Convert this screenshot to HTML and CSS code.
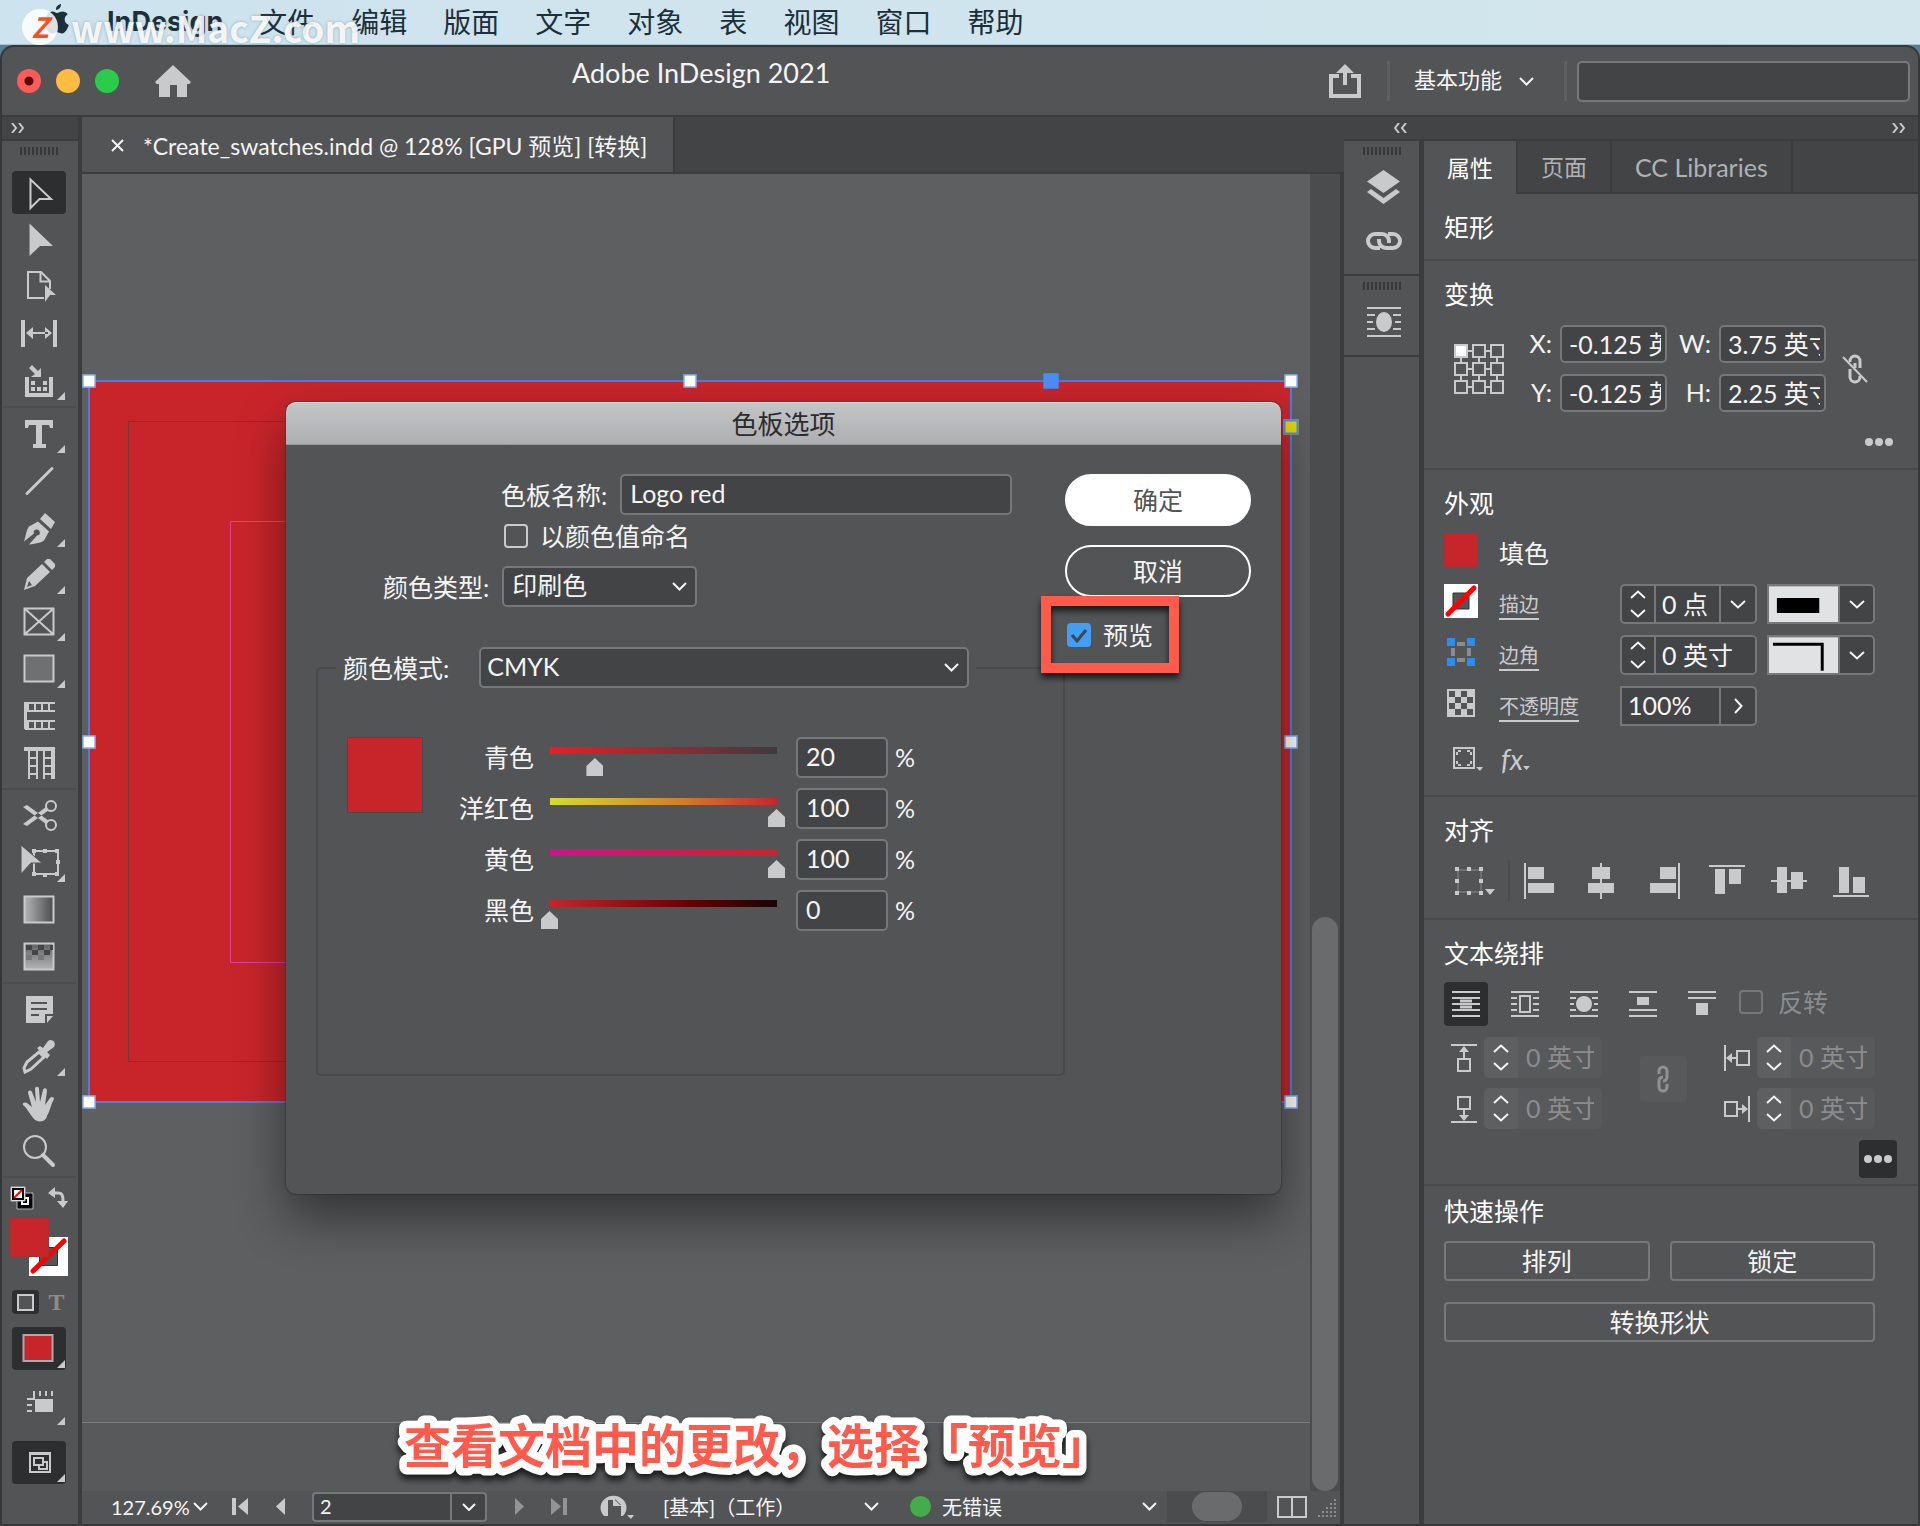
FILE: index.html
```html
<!DOCTYPE html>
<html lang="zh-CN">
<head>
    <meta charset="utf-8">
    <title>Adobe InDesign 2021</title>
    <link rel="stylesheet" href="styles.css">
</head>
<body>
    <header class="menubar">
        <svg class="apple" width="24" height="30" viewBox="0 0 24 30"><path d="M16 0c.3 3-2.400 6-5 6-.3-3 2.200-5.700 5-6zM12 9c1.500 0 3-1.500 5.500-1.500 2 0 4 1 5.200 2.800-4.500 2.700-3.800 9 1.100 10.700C22.500 25 20 29.500 17 29.500c-2 0-2.700-1.200-4.900-1.200-2.300 0-3.100 1.200-5 1.200C3.500 29.500 0 23.500 0 17.500 0 11 4 7.600 7.500 7.600c2 0 3.300 1.400 4.500 1.400z"/></svg>
        <nav class="menu">
            <a href="#" class="app-name">InDesign</a>
            <a href="#">文件</a>
            <a href="#">编辑</a>
            <a href="#">版面</a>
            <a href="#">文字</a>
            <a href="#">对象</a>
            <a href="#">表</a>
            <a href="#">视图</a>
            <a href="#">窗口</a>
            <a href="#">帮助</a>
        </nav>
        <div class="watermark"><span class="watermark-logo">Z</span>www.MacZ.com</div>
    </header>

    <div class="window">
        <div class="titlebar">
            <div class="lights">
                <button class="light close" aria-label="关闭"></button>
                <button class="light minimize" aria-label="最小化"></button>
                <button class="light maximize" aria-label="缩放"></button>
            </div>
            <button class="plain home" aria-label="主页">
                <svg width="36" height="32" viewBox="0 0 36 32" fill="#c9cacc"><path d="M18 0L36 17l-1.500 2H32v13H22V20h-7v12H4V19H1.500L0 17z"/></svg>
            </button>
            <h1>Adobe InDesign 2021</h1>
            <button class="plain share" aria-label="共享">
                <svg width="32" height="34" viewBox="0 0 32 34" fill="none" stroke="#c9cacc" stroke-width="4"><path d="M10 12H2v20h28V12h-8M16 21V6"/><path d="M7 9l9-9 9 9z" fill="#c9cacc" stroke="none"/></svg>
            </button>
            <select class="workspace-select" aria-label="工作区"><option>基本功能</option></select>
            <input type="text" class="search" aria-label="搜索">
        </div>

        <div class="workspace">
            <!-- toolbox -->
            <aside class="toolbox">
                <div class="dock-head">
                    <svg width="13" height="10" viewBox="0 0 13 10" class="line"><path d="M1 0l4 5-4 5M8 0l4 5-4 5"/></svg>
                </div>
                <div class="grip"></div>

                <div class="tool-group">
                    <button class="tool active" aria-label="选择工具"><svg viewBox="0 0 54 43" class="line"><path d="M18.500 8.500L39 28H27.500L18.500 37z"/></svg></button>
                    <button class="tool" aria-label="直接选择工具"><svg viewBox="0 0 54 43" class="solid"><path d="M17.500 5.500L41 28H28L17.500 38z"/></svg></button>
                    <button class="tool" aria-label="页面工具"><svg viewBox="0 0 54 43" class="line"><path d="M32 33H16V7h13l9 9v8M28.500 7v9.500H38"/><path class="fill" d="M33 20l11 10h-6l-5 7z"/></svg></button>
                    <button class="tool" aria-label="间隙工具"><svg viewBox="0 0 54 43" class="solid"><path d="M9 8h4v27H9zM41 8h4v27h-4zM18 20h18v2H18zM14 21l7-6v12zM40 21l-7-6v12z"/></svg></button>
                    <button class="tool" aria-label="内容收集器工具"><svg viewBox="0 0 54 43" class="solid"><path d="M13 18h4v16h20V18h4v20H13zM19 22h4v4h-4zM31 22h4v4h-4zM19 28h4v4h-4zM25 28h4v4h-4zM31 28h4v4h-4zM17 9l3-3 6 6 3-3v9H19l4-3zM45 41l8-8v8z"/></svg></button>
                </div>

                <div class="tool-group">
                    <button class="tool" aria-label="文字工具"><svg viewBox="0 0 54 43" class="solid"><path d="M13 8h28v8h-3l-1-3h-7v19h4v4H21v-4h3V13h-7l-1 3h-3zM45 41l8-8v8z"/></svg></button>
                    <button class="tool" aria-label="直线工具"><svg viewBox="0 0 54 43" class="line"><path d="M15 34.500L40 9.500" stroke-width="3" stroke-linecap="round"/></svg></button>
                    <button class="tool" aria-label="钢笔工具"><svg viewBox="0 0 54 43" class="solid"><path d="M12 35.500c2-6 2-11 5-15l9-5 11 10-5 9c-4 3-9 3-15 4l8-9a3 3 0 1 0-3-2zM28 13l5-6 10 9-4 7zM45 41l8-8v8z"/></svg></button>
                    <button class="tool" aria-label="铅笔工具"><svg viewBox="0 0 54 43" class="solid"><path fill-rule="evenodd" d="M12 37l3-12L30 11l8 8-15 14zM15 34l5-2-3-4zM32 9l3-3h3l5 5v3l-3 3zM45 41l8-8v8z"/></svg></button>
                    <button class="tool" aria-label="矩形框架工具"><svg viewBox="0 0 54 43" class="line"><path d="M12.500 8.500h29v26h-29zM12.500 8.500l29 26M41.500 8.500l-29 26"/><path class="fill" d="M45 41l8-8v8z"/></svg></button>
                    <button class="tool" aria-label="矩形工具"><svg viewBox="0 0 54 43" class="line"><path d="M12.500 8.500h29v26h-29z" fill="#6f7072"/><path class="fill" d="M45 41l8-8v8z"/></svg></button>
                    <button class="tool" aria-label="水平网格工具"><svg viewBox="0 0 54 43" class="line"><path d="M43 9H14v26h29M13 17h30M13 27h30M16 9v8M23 9v8M30 9v8M37 9v8M16 27v8M23 27v8M30 27v8M37 27v8" /><path d="M13.500 8v27" stroke-width="3"/></svg></button>
                    <button class="tool" aria-label="垂直网格工具"><svg viewBox="0 0 54 43" class="line"><path d="M12 8h31M17 8v30M25 8v30M32 8v30M41 8v30M17 17h8M17 25h8M17 33h8M32 17h9M32 25h9M32 33h9"/><path d="M12 8h31M41 8v30" stroke-width="4"/></svg></button>
                </div>

                <div class="tool-group">
                    <button class="tool" aria-label="剪刀工具"><svg viewBox="0 0 54 43" class="line"><circle cx="39" cy="12" r="5"/><circle cx="39" cy="31" r="5"/><path d="M11 13l4-2 22 16-3 3zM11 30l4 2 22-16-3-3z" class="fill"/></svg></button>
                    <button class="tool" aria-label="自由变换工具"><svg viewBox="0 0 54 43" class="line"><path d="M22 10h24v23H22z"/><path class="fill" d="M20 8h4v4h-4zM31 8h4v4h-4zM43 8h4v4h-4zM44 19h4v4h-4zM43 31h4v4h-4zM31 32h4v4h-4zM20 31h4v4h-4z"/><path fill="#c9cacc" stroke="#535456" stroke-width="1" d="M9 4l21 18H19L9 33z"/><path class="fill" d="M45 41l8-8v8z"/></svg></button>
                    <button class="tool" aria-label="渐变色板工具"><svg viewBox="0 0 54 43" class="line"><defs><linearGradient id="swatchGradient"><stop offset="0" stop-color="#b4b5b7"/><stop offset="1" stop-color="#4a4b4d"/></linearGradient></defs><path d="M12.500 8.500h29v26h-29z" fill="url(#swatchGradient)"/></svg></button>
                    <button class="tool" aria-label="渐变羽化工具"><svg viewBox="0 0 54 43" class="line"><defs><linearGradient id="featherGradient" x2="0" y2="1"><stop offset="0" stop-color="#606163"/><stop offset="1" stop-color="#b4b5b7"/></linearGradient></defs><path d="M12.500 8.500h29v26h-29z" fill="url(#featherGradient)"/><path fill="#444547" stroke="none" d="M14 10h6v5h-6zM26 10h6v5h-6zM20 15h6v5h-6zM32 15h6v5h-6zM38 10h3v5h-3z"/><path fill="#77787a" stroke="none" d="M14 20h6v5h-6zM26 20h6v5h-6z"/></svg></button>
                </div>

                <div class="tool-group">
                    <button class="tool" aria-label="附注工具"><svg viewBox="0 0 54 43" class="solid"><path fill-rule="evenodd" d="M14 8h27v18h-8v9H14zM19 14v2h16v-2zM19 20v2h16v-2zM19 26v2h8v-2zM35 28h6l-6 7z"/></svg></button>
                    <button class="tool" aria-label="吸管工具"><svg viewBox="0 0 54 43" class="line"><path d="M27 17l5 5-13 12-6 3-1-4 3-6z" stroke-width="3"/><path class="fill" d="M25 13l3-2 3 2 5-7c4-3 9 2 6 6l-7 5 3 3-3 4z"/><path class="fill" d="M45 41l8-8v8z"/></svg></button>
                    <button class="tool" aria-label="抓手工具"><svg viewBox="0 0 54 43" class="solid"><path d="M22 37c-5-6-7-11-11-14-1-3 3-3 4-2l5 4-4-14c0-3 3-3 4-1l4 10-1-13c0-3 4-3 4 0l1 13 3-12c1-3 4-2 4 1l-2 14 5-7c2-2 4-1 4 1-3 5-4 12-7 17-1 6-9 7-13 3z"/></svg></button>
                    <button class="tool" aria-label="缩放显示工具"><svg viewBox="0 0 54 43" class="line"><circle cx="23" cy="18" r="11"/><path d="M31 26l10 10" stroke-width="4" stroke-linecap="round"/></svg></button>
                </div>

                <div class="colors">
                    <button class="plain" aria-label="默认填色和描边"><svg width="24" height="24" viewBox="0 0 24 24"><path d="M7 7h16v16H7z" fill="#000" stroke="#b9babc"/><path d="M12 12h6v6h-6z" fill="none" stroke="#fff" stroke-width="2"/><path d="M1 1h14v14H1z" fill="#fff" stroke="#b9babc"/><path d="M3 3h10v10H3z" fill="#fff" stroke="#000" stroke-width="2"/><path d="M4 12l8-8" stroke="#f00" stroke-width="2"/></svg></button>
                    <button class="plain" aria-label="互换填色和描边"><svg width="20" height="22" viewBox="0 0 20 22" class="line"><path d="M6 6h4c4 0 5 2 5 8" stroke-width="3"/><path class="fill" d="M0 6l7-6v11zM9 14h11l-5 7z"/></svg></button>
                </div>
                <div class="fill-stroke">
                    <button class="stroke-box" aria-label="描边"><svg width="39" height="39" viewBox="0 0 39 39"><path d="M0 0h39v39H0z" fill="#fff"/><path d="M10.500 10.500h18v18h-18z" fill="#535456" stroke="#333"/><path d="M4 34L35 4" stroke="#f00" stroke-width="5" stroke-linecap="round"/></svg></button>
                    <button class="fill-box" aria-label="填色"></button>
                </div>
                <div class="formatting">
                    <button class="mini active" aria-label="格式针对容器"><svg width="17" height="17" viewBox="0 0 17 17" class="line"><path d="M1 1h15v15H1z" fill="#535456"/></svg></button>
                    <button class="mini text-format">T</button>
                </div>
                <button class="tool active" aria-label="应用颜色"><svg viewBox="0 0 54 43" class="line"><path d="M11.500 8h29v26h-29z" fill="#c8252b" stroke="#aaabad"/><path class="fill" d="M45 41l8-8v8z"/></svg></button>
                <button class="tool view-tool" aria-label="视图选项"><svg viewBox="0 0 54 43" class="solid"><path d="M23 15h18v13H23zM15 14h6V7h2v9h-8zM15 20h5v2h-5zM15 26h5v2h-5zM27 7h2v5h-2zM33 7h2v5h-2zM39 7h2v5h-2zM45 41l8-8v8z"/></svg></button>
                <button class="tool active" aria-label="屏幕模式"><svg viewBox="0 0 54 43" class="line"><path d="M18 12h20v19H18zM18 13h20M22 17h9v7h-9zM27 24v4h8v-7h-4"/><path class="fill" d="M45 41l8-8v8z"/></svg></button>
            </aside>

            <!-- document -->
            <main class="document">
                <div class="tabs">
                    <div class="tab">
                        <button class="plain" aria-label="关闭文档"><svg width="13" height="13" viewBox="0 0 13 13" class="line bright"><path d="M1 1l11 11M12 1L1 12"/></svg></button>
                        <span>*Create_swatches.indd @ 128% [GPU 预览] [转换]</span>
                    </div>
                </div>

                <div class="stage">
                    <div class="pasteboard">
                        <div class="page-edge"></div>
                        <div class="artwork">
                            <div class="bleed-guide"></div>
                            <div class="margin-guide"></div>
                            <i class="handle h-tl"></i><i class="handle h-t"></i><i class="handle h-tr"></i>
                            <i class="handle h-l"></i><i class="handle h-r"></i>
                            <i class="handle h-bl"></i><i class="handle h-br"></i>
                            <i class="handle h-anchor"></i><i class="handle h-corner"></i>
                        </div>

                        <div class="dialog" role="dialog" aria-labelledby="dialogTitle">
                            <h2 id="dialogTitle">色板选项</h2>
                            <form class="dialog-body">
                                <div class="dialog-main">
                                    <div class="form-row name-row">
                                        <label for="swatchName">色板名称:</label>
                                        <input type="text" id="swatchName" value="Logo red">
                                    </div>
                                    <div class="form-row check-row">
                                        <input type="checkbox" id="nameByValue">
                                        <label for="nameByValue">以颜色值命名</label>
                                    </div>
                                    <div class="form-row type-row">
                                        <label for="colorType">颜色类型:</label>
                                        <select id="colorType"><option>印刷色</option></select>
                                    </div>
                                    <fieldset>
                                        <legend>
                                            <label for="colorMode">颜色模式:</label>
                                            <select id="colorMode"><option>CMYK</option></select>
                                        </legend>
                                        <div class="preview-swatch"></div>
                                        <div class="sliders">
                                            <label for="cyan">青色</label>
                                            <input type="range" id="cyan" class="cyan" value="20">
                                            <input type="text" aria-label="青色 %" value="20"><span>%</span>
                                            <label for="magenta">洋红色</label>
                                            <input type="range" id="magenta" class="magenta" value="100">
                                            <input type="text" aria-label="洋红色 %" value="100"><span>%</span>
                                            <label for="yellow">黄色</label>
                                            <input type="range" id="yellow" class="yellow" value="100">
                                            <input type="text" aria-label="黄色 %" value="100"><span>%</span>
                                            <label for="black">黑色</label>
                                            <input type="range" id="black" class="black" value="0">
                                            <input type="text" aria-label="黑色 %" value="0"><span>%</span>
                                        </div>
                                    </fieldset>
                                </div>
                                <div class="dialog-actions">
                                    <button type="button" class="pill primary">确定</button>
                                    <button type="button" class="pill">取消</button>
                                    <div class="preview-check">
                                        <input type="checkbox" id="preview" checked>
                                        <label for="preview">预览</label>
                                    </div>
                                </div>
                            </form>
                        </div>

                        <svg class="caption" width="720" height="70"><text x="11" y="54">查看文档中的更改，选择「预览」</text></svg>
                    </div>
                    <div class="scroll-track"><div class="scroll-thumb"></div></div>
                </div>

                <footer class="statusbar">
                    <select class="zoom" aria-label="缩放级别"><option>127.69%</option></select>
                    <button class="nav" aria-label="第一页"><svg width="16" height="17" viewBox="0 0 16 17" class="solid"><path d="M0 0h4v17H0zM16 0v17L6 8.500z"/></svg></button>
                    <button class="nav" aria-label="上一页"><svg width="9" height="17" viewBox="0 0 9 17" class="solid"><path d="M9 0v17L0 8.500z"/></svg></button>
                    <div class="page-box">
                        <input type="text" aria-label="页码" value="2">
                        <button aria-label="选择页面"><svg width="14" height="8" viewBox="0 0 14 8" class="line bright"><path d="M1 1l6 6 6-6"/></svg></button>
                    </div>
                    <button class="nav dim" aria-label="下一页"><svg width="9" height="17" viewBox="0 0 9 17" class="solid"><path d="M0 0v17l9-8.500z"/></svg></button>
                    <button class="nav dim" aria-label="最后一页"><svg width="16" height="17" viewBox="0 0 16 17" class="solid"><path d="M16 0h-4v17h4zM0 0v17l10-8.500z"/></svg></button>
                    <button class="nav open-btn" aria-label="打开"><svg width="34" height="24" viewBox="0 0 34 24" class="solid"><path d="M4 21A13 12 0 1 1 23 21H21V11h-8V5H8v16z"/><path d="M15 4l6 6h-6z" fill="#535456"/><path d="M15 5l5 5h-5zM27 20h7l-3 4z"/></svg></button>
                    <select class="preset" aria-label="印前检查配置文件"><option>[基本]（工作）</option></select>
                    <span class="status-dot"></span>
                    <select class="errors" aria-label="印前检查"><option>无错误</option></select>
                    <div class="h-scroll"><div></div></div>
                    <button class="plain split" aria-label="拆分视图"><svg width="30" height="22" viewBox="0 0 30 22" class="line"><path d="M1 1h28v20H1zM15 1v20"/></svg></button>
                    <svg class="resize" width="18" height="20" viewBox="0 0 18 20" fill="#8b8c8e"><path d="M16 2h2v2h-2zM12 6h2v2h-2zM16 6h2v2h-2zM8 10h2v2H8zM12 10h2v2h-2zM16 10h2v2h-2zM4 14h2v2H4zM8 14h2v2H8zM12 14h2v2h-2zM16 14h2v2h-2zM0 18h2v2H0zM4 18h2v2H4zM8 18h2v2H8zM12 18h2v2h-2zM16 18h2v2h-2z"/></svg>
                </footer>
            </main>

            <!-- right dock -->
            <aside class="dock">
                <div class="dock-head">
                    <svg width="13" height="10" viewBox="0 0 13 10" class="line"><path d="M5 0L1 5l4 5M12 0L8 5l4 5"/></svg>
                    <svg width="13" height="10" viewBox="0 0 13 10" class="line"><path d="M1 0l4 5-4 5M8 0l4 5-4 5"/></svg>
                </div>
                <div class="dock-body">
                    <div class="icon-strip">
                        <div class="strip-group">
                            <div class="grip"></div>
                            <button class="strip-btn" aria-label="图层"><svg width="33" height="34" viewBox="0 0 33 34" class="solid"><path d="M16.500 0L33 11.500 16.500 23 0 11.500zM0 22l4-3 12.500 9L29 19l4 3-16.500 12z"/></svg></button>
                            <button class="strip-btn" aria-label="链接"><svg width="38" height="20" viewBox="0 0 38 20" class="line"><path d="M15 17h-5a7 7 0 0 1 0-14h7a7 7 0 0 1 7 7v2M23 3h5a7 7 0 0 1 0 14h-7a7 7 0 0 1-7-7V8" stroke-width="4"/></svg></button>
                        </div>
                        <div class="strip-group">
                            <div class="grip"></div>
                            <button class="strip-btn" aria-label="文本绕排"><svg width="34" height="30" viewBox="0 0 34 30" class="line"><path d="M0 1h34M0 8h8M26 8h8M0 15h6M28 15h6M0 22h8M26 22h8M0 29h34"/><ellipse cx="17" cy="15" rx="8" ry="10" class="fill"/></svg></button>
                        </div>
                    </div>

                    <div class="panel">
                        <div class="panel-tabs">
                            <button class="selected">属性</button>
                            <button>页面</button>
                            <button class="libraries">CC Libraries</button>
                        </div>

                        <section class="section"><h3>矩形</h3></section>

                        <section class="section">
                            <h3>变换</h3>
                            <div class="transform">
                                <svg width="50" height="50" viewBox="0 0 50 50" class="line"><path d="M13 7h6M31 7h6M13 25h6M31 25h6M13 43h6M31 43h6M7 13v6M7 31v6M25 13v6M25 31v6M43 13v6M43 31v6"/><path d="M1 1h12v12H1z" fill="#fff"/><path d="M19 1h12v12H19zM37 1h12v12H37zM1 19h12v12H1zM19 19h12v12H19zM37 19h12v12H37zM1 37h12v12H1zM19 37h12v12H19zM37 37h12v12H37z"/></svg>
                                <div class="coords">
                                    <label for="posX">X:</label><input type="text" id="posX" value="-0.125 英寸">
                                    <label for="sizeW">W:</label><input type="text" id="sizeW" value="3.75 英寸">
                                    <label for="posY">Y:</label><input type="text" id="posY" value="-0.125 英寸">
                                    <label for="sizeH">H:</label><input type="text" id="sizeH" value="2.25 英寸">
                                </div>
                                <button class="plain" aria-label="约束比例"><svg width="26" height="30" viewBox="0 0 26 30" class="line"><path d="M8 8V7a5 5 0 0 1 10 0v7M8 15v8a5 5 0 0 0 10 0v-1M13 9v5" stroke-width="3"/><path d="M1 3l24 25"/></svg></button>
                            </div>
                            <button class="plain more" aria-label="更多选项"><svg width="28" height="8" viewBox="0 0 28 8" class="solid"><circle cx="4" cy="4" r="4"/><circle cx="14" cy="4" r="4"/><circle cx="24" cy="4" r="4"/></svg></button>
                        </section>

                        <section class="section">
                            <h3>外观</h3>
                            <div class="appearance">
                                <button class="fill-swatch" aria-label="填色"></button>
                                <span class="fill-label">填色</span>

                                <svg class="row-start" width="34" height="34" viewBox="0 0 34 34"><path d="M0 0h34v34H0z" fill="#fff"/><path d="M9 9h16v16H9z" fill="#535456" stroke="#333"/><path d="M4 30L30 4" stroke="#f00" stroke-width="5" stroke-linecap="round"/></svg>
                                <a href="#">描边</a>
                                <div class="combo">
                                    <span class="stepper"><button aria-label="增加"></button><button aria-label="减少"></button></span>
                                    <input type="text" aria-label="描边粗细" value="0 点">
                                    <button class="drop" aria-label="粗细列表"></button>
                                </div>
                                <button class="combo picker" aria-label="描边样式"><svg width="70" height="38" viewBox="0 0 70 38"><path d="M0 0h70v38H0z" fill="#e1e2e4"/><path d="M8 12h43v15H8z"/></svg><span class="drop"></span></button>

                                <svg class="row-start" width="34" height="34" viewBox="0 0 34 34"><path d="M13 7h8v4h-8zM13 23h8v4h-8zM7 13h4v8H7zM23 13h4v8h-4z" fill="#8b8c8e"/><path d="M3 3h8v8H3zM23 3h8v8h-8zM3 23h8v8H3zM23 23h8v8h-8z" fill="#2c8cf0"/></svg>
                                <a href="#">边角</a>
                                <div class="combo">
                                    <span class="stepper"><button aria-label="增加"></button><button aria-label="减少"></button></span>
                                    <input type="text" aria-label="边角大小" value="0 英寸">
                                </div>
                                <button class="combo picker" aria-label="边角形状"><svg width="70" height="38" viewBox="0 0 70 38"><path d="M0 0h70v38H0z" fill="#e1e2e4"/><path d="M4 7h50v27" fill="none" stroke="#000" stroke-width="3"/></svg><span class="drop"></span></button>

                                <svg class="row-start" width="34" height="34" viewBox="0 0 34 34"><path d="M4 4h26v26H4z" fill="none" stroke="#c9cacc" stroke-width="2"/><path d="M11 5h6v6h-6zM23 5h6v6h-6zM5 11h6v6H5zM17 11h6v6h-6zM11 17h6v6h-6zM23 17h6v6h-6zM5 23h6v6H5zM17 23h6v6h-6z" fill="#c9cacc"/></svg>
                                <a href="#">不透明度</a>
                                <div class="combo square">
                                    <input type="text" aria-label="不透明度" value="100%">
                                    <button class="drop side" aria-label="不透明度滑块"></button>
                                </div>
                            </div>
                            <div class="effects">
                                <button class="plain" aria-label="对象样式"><svg width="30" height="24" viewBox="0 0 30 24" class="line"><path d="M1 1h20v20H1z"/><path d="M5 4h3M14 4h3M5 18h3M14 18h3M4 5v3M4 14v3M18 5v3M18 14v3" stroke="#c9cacc"/><path class="fill" d="M23 20h7l-3 4z"/></svg></button>
                                <button class="plain fx">fx<svg width="7" height="4" viewBox="0 0 7 4" class="solid"><path d="M0 0h7L3.500 4z"/></svg></button>
                            </div>
                        </section>

                        <section class="section">
                            <h3>对齐</h3>
                            <div class="align">
                                <button class="align-to" aria-label="对齐选区"><svg width="40" height="30" viewBox="0 0 40 30" class="line"><path d="M3 4h23v22H3z" stroke="#8b8c8e" stroke-width="1"/><path class="fill" d="M0 1h4v4H0zM12 1h4v4h-4zM24 1h4v4h-4zM0 13h4v4H0zM24 13h4v4h-4zM0 25h4v4H0zM12 25h4v4h-4zM24 25h4v4h-4zM30 23h10l-5 6z"/></svg></button>
                                <button aria-label="左对齐"><svg width="36" height="36" viewBox="0 0 36 36" class="solid"><path d="M1 0h2v36H1zM5 4h16v12H5zM5 20h26v10H5z"/></svg></button>
                                <button aria-label="水平居中对齐"><svg width="36" height="36" viewBox="0 0 36 36" class="solid"><path d="M15 0h2v36h-2zM7 4h18v12H7zM3 20h26v10H3z"/></svg></button>
                                <button aria-label="右对齐"><svg width="36" height="36" viewBox="0 0 36 36" class="solid"><path d="M31 0h2v36h-2zM13 4h16v12H13zM3 20h26v10H3z"/></svg></button>
                                <button aria-label="顶对齐"><svg width="36" height="36" viewBox="0 0 36 36" class="solid"><path d="M0 2h36v2H0zM6 6h10v25H6zM20 6h12v15H20z"/></svg></button>
                                <button aria-label="垂直居中对齐"><svg width="36" height="36" viewBox="0 0 36 36" class="solid"><path d="M0 17h36v2H0zM6 4h10v26H6zM20 9h12v17H20z"/></svg></button>
                                <button aria-label="底对齐"><svg width="36" height="36" viewBox="0 0 36 36" class="solid"><path d="M0 32h36v2H0zM6 4h10v26H6zM20 14h12v16H20z"/></svg></button>
                            </div>
                        </section>

                        <section class="section wrap-section">
                            <h3>文本绕排</h3>
                            <div class="wrap-modes">
                                <button class="active" aria-label="无文本绕排"><svg width="28" height="28" viewBox="0 0 28 28" class="line"><path d="M0 2h28M0 8h28M0 14h28M0 20h28M0 26h28"/><path d="M8 11h12M8 17h12" stroke-width="3"/></svg></button>
                                <button aria-label="沿定界框绕排"><svg width="28" height="28" viewBox="0 0 28 28" class="line"><path d="M0 2h28M0 8h6M22 8h6M0 14h6M22 14h6M0 20h6M22 20h6M0 26h28M9 6h10v16H9z"/></svg></button>
                                <button aria-label="沿对象形状绕排"><svg width="28" height="28" viewBox="0 0 28 28" class="line"><path d="M0 2h28M0 8h6M22 8h6M0 14h4M24 14h4M0 20h6M22 20h6M0 26h28"/><circle cx="14" cy="14" r="8" class="fill"/></svg></button>
                                <button aria-label="上下型绕排"><svg width="28" height="28" viewBox="0 0 28 28" class="line"><path d="M0 2h28M0 20h28M0 26h28"/><path class="fill" d="M8 7h12v8H8z"/></svg></button>
                                <button aria-label="下型绕排"><svg width="28" height="28" viewBox="0 0 28 28" class="line"><path d="M0 2h28M0 8h28"/><path class="fill" d="M8 13h12v12H8z"/></svg></button>
                                <input type="checkbox" id="invert" disabled>
                                <label for="invert">反转</label>
                            </div>
                            <div class="offsets">
                                <svg width="26" height="30" viewBox="0 0 26 30" class="line"><path d="M0 2h26M7 16h12v12H7zM13 16V8"/><path class="fill" d="M8 9l5-6 5 6z"/></svg>
                                <div class="combo off">
                                    <span class="stepper"><button aria-label="增加"></button><button aria-label="减少"></button></span>
                                    <input type="text" aria-label="上位移" value="0 英寸" disabled>
                                </div>
                                <button class="link-all" aria-label="将所有设置设为相同" disabled><svg width="12" height="28" viewBox="0 0 12 28" class="line"><path d="M2 9V6a4 4 0 0 1 8 0v6a4 4 0 0 1-4 4M10 19v3a4 4 0 0 1-8 0v-6a4 4 0 0 1 4-4" stroke="#909193" stroke-width="3"/></svg></button>
                                <svg width="26" height="26" viewBox="0 0 26 26" class="line"><path d="M1 0v26M13 6h12v14H13zM13 13H6"/><path class="fill" d="M8 8v10l-6-5z"/></svg>
                                <div class="combo off">
                                    <span class="stepper"><button aria-label="增加"></button><button aria-label="减少"></button></span>
                                    <input type="text" aria-label="左位移" value="0 英寸" disabled>
                                </div>
                                <svg width="26" height="30" viewBox="0 0 26 30" class="line"><path d="M0 28h26M7 3h12v12H7zM13 15v8"/><path class="fill" d="M8 21l5 6 5-6z"/></svg>
                                <div class="combo off">
                                    <span class="stepper"><button aria-label="增加"></button><button aria-label="减少"></button></span>
                                    <input type="text" aria-label="下位移" value="0 英寸" disabled>
                                </div>
                                <svg width="26" height="26" viewBox="0 0 26 26" class="line"><path d="M25 0v26M1 6h12v14H1zM13 13h7"/><path class="fill" d="M18 8v10l6-5z"/></svg>
                                <div class="combo off">
                                    <span class="stepper"><button aria-label="增加"></button><button aria-label="减少"></button></span>
                                    <input type="text" aria-label="右位移" value="0 英寸" disabled>
                                </div>
                            </div>
                            <button class="more-box" aria-label="更多选项"><svg width="28" height="8" viewBox="0 0 28 8" class="solid"><circle cx="4" cy="4" r="4"/><circle cx="14" cy="4" r="4"/><circle cx="24" cy="4" r="4"/></svg></button>
                        </section>

                        <section class="section quick-section">
                            <h3>快速操作</h3>
                            <div class="quick">
                                <button>排列</button>
                                <button>锁定</button>
                                <button class="wide">转换形状</button>
                            </div>
                        </section>
                    </div>
                </div>
            </aside>
        </div>
    </div>
</body>
</html>
```
FILE: styles.css
```css
*, ::after {
    box-sizing: border-box;
}
body {
    display: flex;
    flex-direction: column;
    min-height: 100vh;
    margin: 0;
    background: #5b7c93;
    color: #f4f4f5;
    font-family: Lato, "Noto Sans CJK SC", sans-serif;
    font-size: 25px;
    line-height: 30px;
}
button, input, select {
    margin: 0;
    padding: 0;
    border: none;
    border-radius: 0;
    background: none;
    color: inherit;
    font: inherit;
}
h1, h2, h3 {
    margin: 0;
    font-weight: normal;
}
svg {
    display: block;
    flex: none;
}
.line {
    fill: none;
    stroke: #c9cacc;
    stroke-width: 2;
}
.line .fill {
    fill: #c9cacc;
    stroke: none;
}
.bright {
    stroke: #f4f4f5;
}
.solid {
    fill: #c9cacc;
}
.plain {
    display: flex;
    align-items: center;
    justify-content: center;
}
input[type=text], select {
    height: 41px;
    border: 2px solid #77787a;
    border-radius: 5px;
    background: #434446;
    padding: 0 8px 3px;
    min-width: 0;
}
select {
    appearance: none;
    background: #434446 url("data:image/svg+xml,%3Csvg xmlns='http://www.w3.org/2000/svg' width='15' height='9' fill='none' stroke='%23f4f4f5' stroke-width='2'%3E%3Cpath d='M1 1l6.500 6.500L14 1'/%3E%3C/svg%3E") no-repeat right 8px center;
}
input[type=checkbox] {
    appearance: none;
    flex: none;
    width: 24px;
    height: 24px;
    border: 2px solid #c9cacc;
    border-radius: 4px;
}
input[type=checkbox]:checked {
    border: none;
    background: #429df5 url("data:image/svg+xml,%3Csvg xmlns='http://www.w3.org/2000/svg' width='24' height='24' fill='none' stroke='%23434446' stroke-width='3'%3E%3Cpath d='M5 12l5 6 9-11'/%3E%3C/svg%3E");
}
input[type=checkbox]:disabled {
    border-color: #77787a;
}

/* menu bar */
.menubar {
    position: relative;
    display: flex;
    align-items: center;
    height: 45px;
    padding-left: 45px;
    border-bottom: 1px solid #a9c4d2;
    background: linear-gradient(90deg, #cde3ed, #d3e6ed);
}
.apple {
    margin-bottom: 6px;
    fill: #1c2f3a;
}
.menu {
    display: flex;
    gap: 36px;
    margin-left: 38px;
    font-size: 28px;
}
.menu a {
    color: #1c2f3a;
    text-decoration: none;
}
.menu .app-name {
    font-family: Inter, sans-serif;
    font-size: 27px;
    font-weight: bold;
}
.watermark {
    position: absolute;
    left: 22px;
    top: 9px;
    display: flex;
    align-items: center;
    gap: 13px;
    color: rgba(255, 255, 255, 0.88);
    font-family: "Noto Sans CJK SC", sans-serif;
    font-size: 37px;
    font-weight: bold;
    text-shadow: 0 0 3px rgba(90, 110, 120, 0.5);
}
.watermark-logo {
    width: 36px;
    height: 36px;
    border-radius: 50%;
    background: rgba(255, 255, 255, 0.85);
    color: #f4511e;
    font-size: 28px;
    font-style: italic;
    line-height: 34px;
    text-align: center;
    text-shadow: none;
}

/* application window */
.window {
    display: flex;
    flex: 1;
    flex-direction: column;
    border: 2px solid #37383a;
    border-radius: 14px 14px 0 0;
    background: #535456;
    overflow: hidden;
}
.titlebar {
    display: flex;
    align-items: center;
    height: 70px;
    padding: 0 8px 0 15px;
    border-bottom: 2px solid #3b3c3e;
}
.lights {
    display: flex;
    gap: 15px;
}
.light {
    width: 24px;
    height: 24px;
    border-radius: 50%;
}
.light.close {
    background: radial-gradient(circle, #5a0a06 4px, #fc5b57 5px);
}
.light.minimize {
    background: #fdbc40;
}
.light.maximize {
    background: #29cc4b;
}
.home {
    margin-left: 36px;
}
.titlebar h1 {
    flex: 1;
    align-self: flex-start;
    padding: 11px 0 0 381px;
    font-size: 27px;
}
.share {
    padding-right: 26px;
    border-right: 3px solid #5f6062;
    height: 40px;
}
.workspace-select {
    width: 177px;
    height: 40px;
    padding: 0 0 2px 24px;
    border: none;
    border-right: 3px solid #5f6062;
    border-radius: 0;
    background-color: transparent;
    background-position: right 30px center;
    font-size: 22px;
}
.titlebar .search {
    width: 333px;
    margin-left: 10px;
}
.workspace {
    display: flex;
    flex: 1;
}
.dock-head {
    display: flex;
    align-items: center;
    height: 24px;
    border-bottom: 2px solid #3b3c3e;
    background: #434446;
}
.grip {
    width: 38px;
    height: 8px;
    margin: 6px auto 0;
    background: repeating-linear-gradient(90deg, #37383a 0 2px, #535456 2px 4px);
}

/* toolbox */
.toolbox {
    display: flex;
    flex-direction: column;
    width: 80px;
    padding-right: 2px;
    border-right: 4px solid #3b3c3e;
}
.toolbox .dock-head {
    margin-right: -2px;
    padding-left: 9px;
}
.toolbox > .grip {
    margin-bottom: 14px;
}
.tool-group {
    display: flex;
    flex-direction: column;
    margin-bottom: 2px;
    padding-bottom: 2px;
    border-bottom: 2px solid #4b4c4e;
}
.tool {
    width: 54px;
    height: 43px;
    margin: 2px auto;
    border-radius: 4px;
}
.tool.active, .mini.active {
    background: #2d2e30;
}
.colors {
    display: flex;
    justify-content: space-between;
    height: 32px;
    padding: 3px 8px 0;
}
.fill-stroke {
    position: relative;
    width: 58px;
    height: 58px;
    margin: 6px 0 0 8px;
}
.stroke-box {
    position: absolute;
    right: 0;
    bottom: 0;
}
.fill-box {
    position: absolute;
    left: 0;
    top: 0;
    width: 39px;
    height: 39px;
    background: #c8252b;
    border: 1px solid #a83034;
}
.formatting {
    display: flex;
    gap: 4px;
    margin: 14px 0 11px 10px;
}
.mini {
    display: flex;
    align-items: center;
    justify-content: center;
    width: 27px;
    height: 24px;
    border-radius: 4px;
}
.text-format {
    color: #8b8c8e;
    font-family: "Liberation Serif", serif;
    font-size: 24px;
    font-weight: bold;
}
.view-tool {
    margin: 12px auto;
}

/* document area */
.document {
    display: flex;
    flex: 1;
    flex-direction: column;
    min-width: 0;
}
.tabs {
    display: flex;
    height: 57px;
    border-bottom: 2px solid #3b3c3e;
    background: #434446;
}
.tab {
    display: flex;
    align-items: center;
    gap: 19px;
    padding: 2px 26px 0 29px;
    border-right: 2px solid #3b3c3e;
    background: #535456;
    font-size: 23px;
}
.stage {
    display: flex;
    flex: 1;
}
.pasteboard {
    position: relative;
    flex: 1;
    background: #5e5f61;
    overflow: hidden;
}
.page-edge {
    position: absolute;
    left: 0;
    right: 0;
    bottom: 0;
    height: 69px;
    border-top: 1px solid #7a7b7d;
    background: #58595b;
}
.artwork {
    position: absolute;
    left: 7px;
    top: 207px;
    width: 1202px;
    height: 721px;
    outline: 2px solid #4b7ee0;
    outline-offset: -1px;
    background: #c8252b;
}
.bleed-guide {
    position: absolute;
    left: 39px;
    top: 40px;
    width: 1120px;
    height: 641px;
    border: 1px solid #7c3436;
}
.margin-guide {
    position: absolute;
    left: 141px;
    top: 140px;
    width: 900px;
    height: 442px;
    border: 1px solid #e0409c;
}
.handle {
    position: absolute;
    width: 13px;
    height: 13px;
    border: 1px solid #4b8ef5;
    background: #fff;
    translate: -50% -50%;
}
.h-tl, .h-l, .h-bl {
    left: 0;
}
.h-tr, .h-r, .h-br, .h-corner {
    left: 100%;
}
.h-tl, .h-t, .h-tr, .h-anchor {
    top: 0;
}
.h-l, .h-r {
    top: 50%;
}
.h-bl, .h-br {
    top: 100%;
}
.h-t {
    left: 50%;
}
.h-anchor {
    left: 80%;
    width: 15px;
    height: 15px;
    background: #4b8ef5;
}
.h-corner {
    top: 46px;
    width: 15px;
    height: 15px;
    border-width: 2px;
    background: #ecd800;
}
.scroll-track {
    display: flex;
    align-items: flex-end;
    justify-content: center;
    width: 34px;
    border-right: 4px solid #3b3c3e;
    background: #4b4c4e;
}
.scroll-thumb {
    width: 26px;
    height: 574px;
    border-radius: 13px;
    background: #6a6b6d;
}

/* swatch options dialog */
.dialog {
    position: absolute;
    left: 204px;
    top: 228px;
    width: 995px;
    border-radius: 10px;
    background: #535456;
    box-shadow: 0 24px 50px rgba(0, 0, 0, 0.45), 0 0 1px 1px rgba(60, 60, 60, 0.5);
}
.dialog h2 {
    height: 43px;
    border-top: 1px solid #dcdcde;
    border-bottom: 1px solid #98999b;
    border-radius: 10px 10px 0 0;
    background: linear-gradient(#c4c5c7, #adaeb0);
    color: #2b2c2e;
    font-size: 26px;
    line-height: 42px;
    text-align: center;
}
.dialog-body {
    display: flex;
    padding: 29px 30px 118px;
}
.dialog-main {
    flex: 1;
}
.form-row {
    display: flex;
    align-items: center;
}
.name-row {
    gap: 13px;
    padding: 0 53px 0 185px;
}
.name-row input {
    flex: 1;
}
.check-row {
    gap: 12px;
    height: 41px;
    padding-left: 188px;
}
.type-row {
    gap: 13px;
    margin: 10px 0 40px;
    padding-left: 67px;
}
.type-row select {
    width: 195px;
}
fieldset {
    display: flex;
    align-items: flex-start;
    height: 429px;
    min-width: 0;
    margin: 0;
    padding: 49px 0 0 29px;
    border: 2px solid #48494b;
    border-radius: 5px;
}
legend {
    display: flex;
    align-items: center;
    gap: 30px;
    width: 640px;
    margin-left: -11px;
    padding: 0 7px;
}
legend select {
    flex: 1;
    padding-left: 6px;
}
.preview-swatch {
    width: 76px;
    height: 76px;
    border: 1px solid #48494b;
    background: #c8252b;
}
.sliders {
    display: grid;
    grid-template-columns: 111px 244px 96px 24px;
    column-gap: 7px;
    row-gap: 10px;
    align-items: center;
    line-height: 39px;
}
.sliders label {
    text-align: right;
}
.sliders input[type=text] {
    margin-left: 4px;
}
input[type=range] {
    appearance: none;
    height: 41px;
    background-position: center 10px;
    background-repeat: no-repeat;
    background-size: calc(100% - 17px) 7px;
}
input[type=range]::-webkit-slider-runnable-track {
    height: 41px;
}
input[type=range]::-webkit-slider-thumb {
    appearance: none;
    width: 17px;
    height: 18px;
    margin-top: 21px;
    background: #c9cacc;
    clip-path: polygon(50% 0, 100% 45%, 100% 100%, 0 100%, 0 45%);
}
.cyan {
    background-image: linear-gradient(90deg, #ee1c25, #3e3a3f);
}
.magenta {
    background-image: linear-gradient(90deg, #d5dc30, #d07a2c 60%, #c8252b);
}
.yellow {
    background-image: linear-gradient(90deg, #cc1489, #c8252b);
}
.black {
    background-image: linear-gradient(90deg, #c8252b, #6b0003 60%, #170404);
}
.dialog-actions {
    position: relative;
    display: flex;
    flex-direction: column;
    width: 186px;
}
.pill {
    height: 52px;
    margin-bottom: 19px;
    border: 2px solid #fff;
    border-radius: 26px;
}
.pill.primary {
    background: #fff;
    color: #535456;
}
.preview-check {
    position: relative;
    display: flex;
    align-items: center;
    gap: 12px;
    height: 24px;
    margin-top: 7px;
    padding-left: 2px;
}
.preview-check::after {
    content: "";
    position: absolute;
    left: -24px;
    top: -27px;
    width: 138px;
    height: 77px;
    border: 10px solid #ff5a4b;
    filter: drop-shadow(0 5px 3px rgba(0, 0, 0, 0.7));
    pointer-events: none;
}
.caption {
    position: absolute;
    left: 311px;
    bottom: 12px;
    overflow: visible;
    fill: #ff5a4b;
    stroke: #fff;
    stroke-width: 15px;
    stroke-linejoin: round;
    paint-order: stroke;
    font-size: 47px;
    font-weight: bold;
    filter: drop-shadow(0 5px 3px rgba(0, 0, 0, 0.7));
}

/* status bar */
.statusbar {
    display: flex;
    align-items: center;
    height: 33px;
    padding-bottom: 2px;
    border-right: 4px solid #3b3c3e;
    font-size: 20px;
}
.statusbar select {
    height: 30px;
    padding: 0 0 2px;
    border: none;
    background-color: transparent;
    background-position: right center;
}
.statusbar .zoom {
    width: 97px;
    margin: 0 12px 0 29px;
}
.nav {
    display: flex;
    align-items: center;
    justify-content: center;
    width: 40px;
}
.nav.dim {
    opacity: 0.55;
}
.page-box {
    display: flex;
    width: 175px;
    height: 30px;
    margin: 0 12px;
    border: 2px solid #77787a;
    border-radius: 4px;
    background: #434446;
}
.page-box input[type=text] {
    flex: 1;
    height: 26px;
    padding: 0 6px 2px;
    border: none;
    background: none;
}
.page-box button {
    display: flex;
    align-items: center;
    justify-content: center;
    width: 35px;
    border-left: 2px solid #77787a;
}
.open-btn {
    margin: 0 26px 0 18px;
}
.preset {
    width: 216px;
}
.status-dot {
    width: 21px;
    height: 21px;
    margin: 0 11px 0 31px;
    border-radius: 50%;
    background: #44ad4b;
}
.errors {
    flex: 1;
}
.h-scroll {
    width: 100px;
    margin: 0 10px;
    background: #4b4c4e;
}
.h-scroll div {
    width: 50px;
    height: 29px;
    margin: 1px auto;
    border-radius: 15px;
    background: #6a6b6d;
}
.resize {
    margin: 0 4px 0 11px;
}

/* right dock */
.dock {
    width: 574px;
}
.dock .dock-head {
    justify-content: space-between;
    padding: 0 13px 0 50px;
}
.dock-body {
    display: flex;
    height: calc(100% - 24px);
}
.icon-strip {
    width: 80px;
    border-right: 5px solid #3b3c3e;
}
.strip-group {
    display: flex;
    flex-direction: column;
    padding-bottom: 6px;
    border-bottom: 2px solid #3b3c3e;
}
.strip-btn {
    display: flex;
    align-items: center;
    justify-content: center;
    height: 54px;
    padding-left: 4px;
}
.strip-group .grip {
    margin-bottom: 5px;
}
.panel {
    flex: 1;
}
.panel-tabs {
    display: flex;
    height: 53px;
    background: #434446;
    border-bottom: 2px solid #3b3c3e;
    font-size: 23px;
}
.panel-tabs button {
    padding: 0 23px;
    border-right: 2px solid #3b3c3e;
    color: #b0b1b3;
}
.panel-tabs button.selected {
    height: 53px;
    background: #535456;
    color: #fff;
}
.panel-tabs .libraries {
    font-size: 25px;
}
.section {
    padding: 18px 21px 16px 20px;
    border-bottom: 2px solid #48494b;
}
.section h3 {
    margin-bottom: 1px;
    color: #fff;
    font-size: 25px;
}
.transform {
    display: flex;
    align-items: center;
    padding: 15px 0 20px 10px;
}
.coords {
    display: grid;
    grid-template-columns: 48px 107px 36px 107px;
    gap: 11px 8px;
    align-items: center;
    margin-right: 16px;
    text-align: right;
}
.coords label {
    padding-bottom: 3px;
}
.coords input[type=text] {
    width: 100%;
    height: 38px;
    padding: 0 4px 3px 7px;
}
.more {
    height: 20px;
    margin-left: auto;
    padding-right: 4px;
}
.appearance {
    display: grid;
    grid-template-columns: 34px 1fr 137px 108px;
    grid-auto-rows: 40px;
    gap: 11px 10px;
    align-items: center;
    margin: 15px 22px 0 0;
}
.appearance a {
    justify-self: start;
    margin-left: 11px;
    color: #c9cacc;
    font-size: 20px;
    text-underline-offset: 6px;
}
.row-start {
    align-self: start;
}
.fill-swatch {
    align-self: start;
    width: 34px;
    height: 34px;
    border: 1px solid #a83034;
    background: #c8252b;
}
.fill-label {
    grid-column: 2 / 5;
    margin-left: 11px;
}
.combo {
    display: flex;
    height: 40px;
    border: 2px solid #77787a;
    border-radius: 5px;
    background: #434446;
    overflow: hidden;
}
.combo.square {
    border-radius: 0 5px 5px 0;
}
.combo input[type=text] {
    flex: 1;
    width: 0;
    height: 36px;
    padding: 0 6px 3px;
    border: none;
    border-radius: 0;
}
.stepper {
    display: flex;
    flex-direction: column;
    justify-content: space-between;
    width: 34px;
    padding: 4px 8px;
    border-right: 2px solid #77787a;
}
.stepper button, .drop {
    height: 10px;
    background: url("data:image/svg+xml,%3Csvg xmlns='http://www.w3.org/2000/svg' width='16' height='9' fill='none' stroke='%23f4f4f5' stroke-width='2'%3E%3Cpath d='M1 1l7 6.500L15 1'/%3E%3C/svg%3E") no-repeat center;
}
.stepper button:first-child {
    rotate: 180deg;
}
.drop {
    width: 36px;
    height: 36px;
    border-left: 2px solid #77787a;
}
.picker {
    border-radius: 0 5px 5px 0;
}
.picker svg {
    width: 69px;
}
.drop.side {
    background-image: url("data:image/svg+xml,%3Csvg xmlns='http://www.w3.org/2000/svg' width='9' height='16' fill='none' stroke='%23f4f4f5' stroke-width='2'%3E%3Cpath d='M1 1l6.500 7L1 15'/%3E%3C/svg%3E");
}
.effects {
    display: flex;
    align-items: center;
    gap: 18px;
    height: 53px;
    padding: 12px 0 0 9px;
}
.fx {
    align-items: flex-end;
    color: #c9cacc;
    font-size: 28px;
    font-style: italic;
}
.fx svg {
    margin-bottom: 4px;
}
.align {
    display: flex;
    height: 42px;
    margin: 15px 15px 0 0;
}
.align button {
    display: flex;
    flex: 1;
    align-items: center;
    justify-content: center;
}
.align .align-to {
    flex: none;
    width: 66px;
    padding-right: 3px;
    border-right: 2px solid #4b4c4e;
}
.wrap-section {
    padding-bottom: 6px;
}
.wrap-modes {
    display: flex;
    align-items: center;
    gap: 15px;
    margin-top: 14px;
    color: #8b8c8e;
}
.wrap-modes button {
    display: flex;
    align-items: center;
    justify-content: center;
    width: 44px;
    height: 44px;
    border-radius: 4px;
}
.wrap-modes input, .wrap-modes label {
    margin-bottom: 4px;
}
.wrap-modes .active, .more-box {
    background: #2d2e30;
}
.offsets {
    display: grid;
    grid-template-columns: 26px 118px 1fr 26px 118px;
    gap: 10px 7px;
    align-items: center;
    margin: 11px 22px 11px 0;
    padding-left: 7px;
}
.combo.off {
    height: 41px;
    border: none;
    background: #58595b;
    color: #8b8c8e;
}
.combo.off input[type=text] {
    height: 41px;
    padding: 0 8px 3px;
    background: none;
}
.combo.off .stepper {
    padding: 7px 8px;
    border: none;
    background: #5e5f61;
}
.link-all {
    display: flex;
    align-items: center;
    justify-content: center;
    grid-row: 1 / 3;
    grid-column: 3;
    justify-self: center;
    width: 47px;
    height: 46px;
    margin-bottom: 8px;
    border-radius: 4px;
    background: #58595b;
}
.more-box {
    display: flex;
    align-items: center;
    justify-content: center;
    width: 38px;
    height: 38px;
    margin-left: auto;
    border-radius: 4px;
}
.quick-section {
    padding-top: 10px;
    border-bottom: none;
}
.quick {
    display: grid;
    grid-template-columns: 1fr 1fr;
    gap: 21px 20px;
    margin: 15px 22px 0 0;
}
.quick button {
    height: 40px;
    border: 2px solid #77787a;
    border-radius: 4px;
}
.quick .wide {
    grid-column: 1 / 3;
}
```
